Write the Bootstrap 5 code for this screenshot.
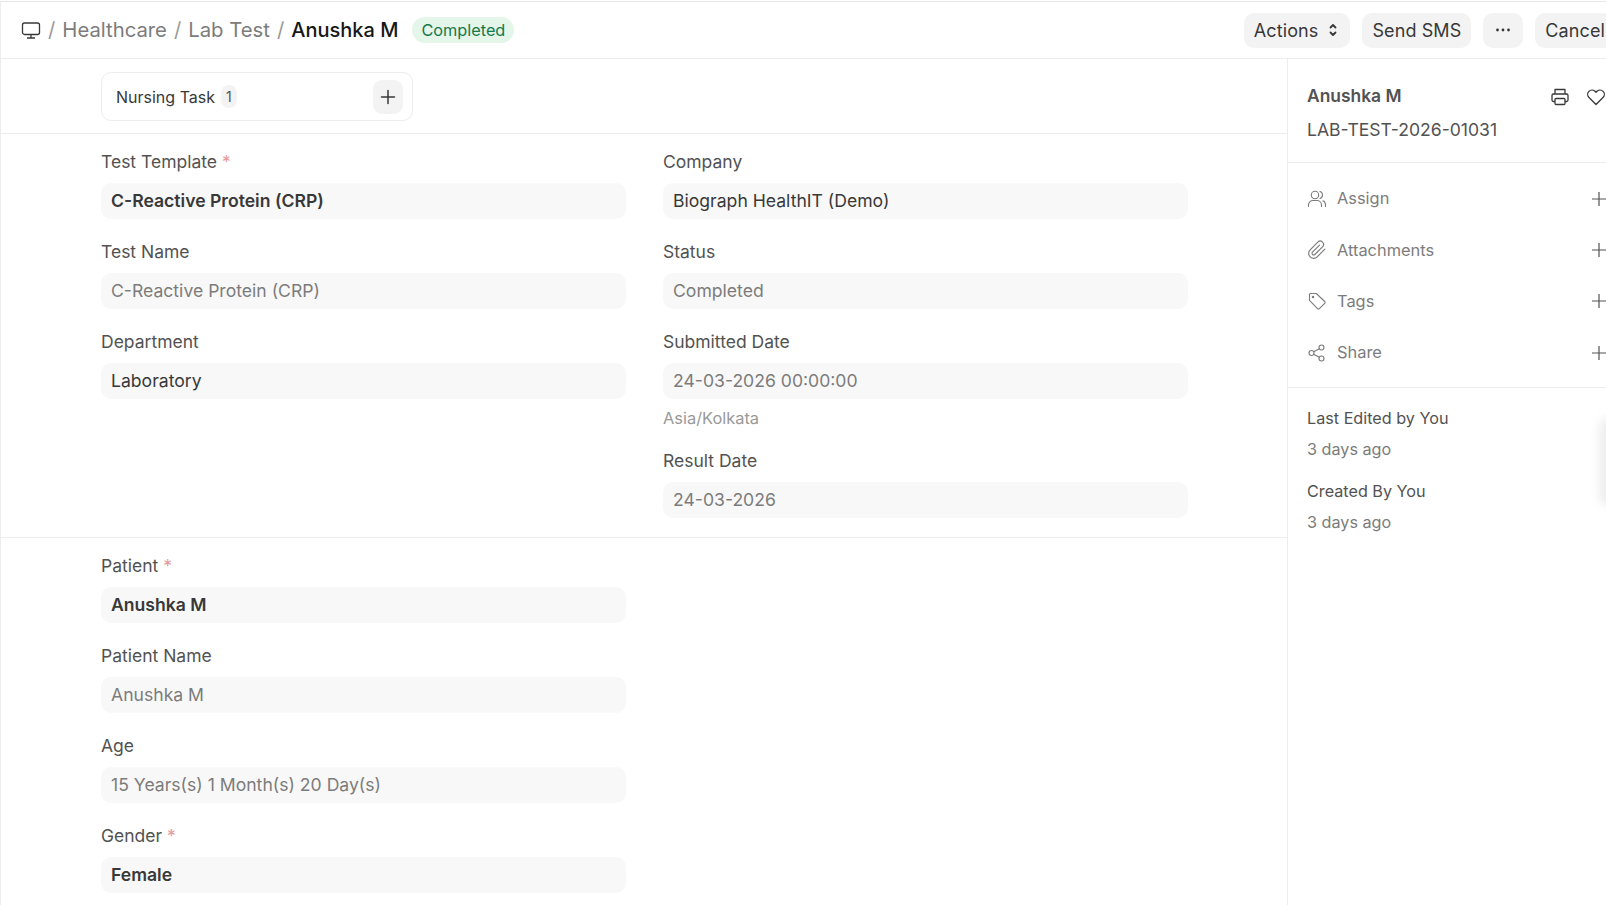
<!DOCTYPE html>
<html lang="en">
<head>
<meta charset="UTF-8">
<title>Anushka M - Lab Test</title>
<link rel="stylesheet" href="https://cdn.jsdelivr.net/npm/bootstrap@5.3.0/dist/css/bootstrap.min.css">
<style>
html, body { height: 905px; overflow: hidden; }
body { font-family: Inter, "Liberation Sans", sans-serif; background: #fff; color: #383838; }
.page-shell { width: 1606px; height: 905px; overflow: hidden; border-top: 1px solid #e6e6e6; border-left: 1px solid #ededed; margin-top: 1px; position: relative; }
.page-head { height: 57px; border-bottom: 1px solid #ededed; padding-left: 20px; white-space: nowrap; }
.crumb { font-size: 20.3px; color: #7c7c7c; }
.crumb-sep { color: #999; margin: 0 7px; }
.crumb-now { color: #171717; font-weight: 500; font-size: 20px; }
.status-pill { background: #e4f5e9; color: #16794c; font-size: 16.3px; height: 26px; line-height: 26px; padding: 0 9px; border-radius: 13px; margin-left: 14px; }
.head-btn { background: #f3f3f3; color: #383838; font-size: 18px; height: 35px; border-radius: 10px; padding: 0 10px; flex: none; letter-spacing: .1px; }
.head-more { width: 40px; }
.head-actions { gap: 12px; margin-left: auto; margin-right: -9px; }
.main-col { width: 1287px; flex: none; border-right: 1px solid #ededed; height: 847px; overflow: hidden; }
.links-bar { height: 75px; padding: 13px 0 0 100px; border-bottom: 1px solid #ededed; }
.link-box { width: 312px; height: 49px; border: 1px solid #ededed; border-radius: 10px; padding: 0 9px 0 14px; font-size: 16px; }
.count-chip { background: #f3f3f3; border-radius: 8px; font-size: 14px; padding: 1px 5px; margin-left: 6px; color: #525252; }
.add-box { width: 30px; height: 34px; margin-left: auto; background: #f3f3f3; border-radius: 9px; }
.form-part { padding: 18px 99px 19px 100px; border-bottom: 1px solid #ededed; }
.form-part .row { --bs-gutter-x: 37px; --bs-gutter-y: 0; }
.fld { margin-bottom: 23px; }
.fld:last-child { margin-bottom: 0; }
.fld-label { font-size: 17.5px; line-height: 20px; margin-bottom: 11px; color: #525252; }
.req { color: #e79a9a; }
.fld-value { height: 36px; line-height: 36px; background: #f8f8f8; border-radius: 10px; padding-left: 10px; font-size: 17.6px; color: #383838; }
.fld-value.is-strong { font-weight: 600; }
.fld-value.is-read { color: #7c7c7c; }
.fld-help { font-size: 16.4px; line-height: 20px; color: #999; margin: 9px 0 2px; }
.side-col { width: 330px; flex: none; color: #525252; }
.side-top { height: 104px; padding: 26px 0 0 19px; border-bottom: 1px solid #ededed; }
.side-name { font-size: 17.4px; line-height: 22px; font-weight: 600; }
.side-id { font-size: 17.6px; line-height: 22px; margin-top: 12px; }
.side-icons { gap: 16px; position: absolute; top: 85px; left: 1549px; }
.side-links { height: 225px; padding: 10px 0 0 19px; border-bottom: 1px solid #ededed; }
.side-link { height: 51.3px; font-size: 16.4px; color: #7c7c7c; }
.side-link svg:first-child { margin-right: 10px; flex: none; }
.side-plus { position: absolute; left: 1590px; }
.side-meta { padding: 20px 0 0 19px; font-size: 16.2px; }
.meta-line { line-height: 20px; margin-bottom: 10.5px; }
.meta-ago { color: #7c7c7c; margin-bottom: 22.5px; }
.edge-handle { position: absolute; left: 1598px; top: 416px; width: 20px; height: 88px; background: #eee; filter: blur(5px); border-radius: 10px; }
</style>
</head>
<body>
<div class="page-shell">
  <!-- header -->
  <div class="page-head d-flex align-items-center">
    <svg width="20" height="20" viewBox="0 0 20 20" fill="none" stroke="#383838" stroke-width="1.3"><rect x="1.5" y="3" width="17" height="11.5" rx="2"/><path d="M10 14.5v3.5M6 18h8"/></svg>
    <span class="crumb crumb-sep">/</span><span class="crumb">Healthcare</span>
    <span class="crumb crumb-sep">/</span><span class="crumb">Lab Test</span>
    <span class="crumb crumb-sep">/</span><span class="crumb crumb-now">Anushka M</span>
    <span class="status-pill">Completed</span>
    <div class="head-actions d-flex align-items-center">
      <div class="head-btn d-flex align-items-center">Actions
        <svg class="ms-2" width="14" height="18" viewBox="0 0 14 18" fill="none" stroke="#383838" stroke-width="1.8" stroke-linecap="round" stroke-linejoin="round"><path d="M4.5 6.500 7 4 9.500 6.500M4.500 11.500 7 14 9.500 11.500"/></svg>
      </div>
      <div class="head-btn d-flex align-items-center">Send SMS</div>
      <div class="head-btn head-more d-flex align-items-center justify-content-center">
        <svg width="16" height="4" viewBox="0 0 16 4" fill="#383838"><circle cx="2.500" cy="2" r="1.400"/><circle cx="8" cy="2" r="1.400"/><circle cx="13.500" cy="2" r="1.400"/></svg>
      </div>
      <div class="head-btn d-flex align-items-center">Cancel</div>
    </div>
  </div>

  <div class="d-flex">
    <div class="main-col">
      <div class="links-bar">
        <div class="link-box d-flex align-items-center">
          <span>Nursing Task</span><span class="count-chip">1</span>
          <div class="add-box d-flex align-items-center justify-content-center">
            <svg width="16" height="16" viewBox="0 0 16 16" stroke="#383838" stroke-width="1.500" stroke-linecap="round"><path d="M8 1.500v13M1.500 8h13"/></svg>
          </div>
        </div>
      </div>

      <div class="form-part">
        <div class="row">
          <div class="col-6">
            <div class="fld"><div class="fld-label">Test Template <span class="req">*</span></div><div class="fld-value is-strong">C-Reactive Protein (CRP)</div></div>
            <div class="fld"><div class="fld-label">Test Name</div><div class="fld-value is-read">C-Reactive Protein (CRP)</div></div>
            <div class="fld"><div class="fld-label">Department</div><div class="fld-value">Laboratory</div></div>
          </div>
          <div class="col-6">
            <div class="fld"><div class="fld-label">Company</div><div class="fld-value">Biograph HealthIT (Demo)</div></div>
            <div class="fld"><div class="fld-label">Status</div><div class="fld-value is-read">Completed</div></div>
            <div class="fld"><div class="fld-label">Submitted Date</div><div class="fld-value is-read">24-03-2026 00:00:00</div><div class="fld-help">Asia/Kolkata</div></div>
            <div class="fld"><div class="fld-label">Result Date</div><div class="fld-value is-read">24-03-2026</div></div>
          </div>
        </div>
      </div>

      <div class="form-part border-0">
        <div class="row">
          <div class="col-6">
            <div class="fld"><div class="fld-label">Patient <span class="req">*</span></div><div class="fld-value is-strong">Anushka M</div></div>
            <div class="fld"><div class="fld-label">Patient Name</div><div class="fld-value is-read">Anushka M</div></div>
            <div class="fld"><div class="fld-label">Age</div><div class="fld-value is-read">15 Years(s) 1 Month(s) 20 Day(s)</div></div>
            <div class="fld"><div class="fld-label">Gender <span class="req">*</span></div><div class="fld-value is-strong">Female</div></div>
          </div>
        </div>
      </div>
    </div>

    <!-- sidebar -->
    <div class="side-col">
      <div class="side-top">
        <div class="side-name">Anushka M</div>
        <div class="side-id">LAB-TEST-2026-01031</div>
      </div>
      <div class="side-links">
        <div class="side-link d-flex align-items-center">
          <svg width="20" height="20" viewBox="0 0 20 20" fill="none" stroke="#7c7c7c" stroke-width="1.100" stroke-linecap="round"><circle cx="8" cy="6" r="3.700"/><path d="M1.500 17.500v-1.500a4.500 4.500 0 0 1 4.500-4.500h4a4.500 4.500 0 0 1 4.500 4.500v1.500M13 2.500a3.700 3.700 0 0 1 0 7M16 11.800a4.500 4.500 0 0 1 2.500 4.200v1.500"/></svg>
          Assign
          <svg class="side-plus" width="16" height="16" viewBox="0 0 16 16" stroke="#525252" stroke-width="1.200"><path d="M8 1v14M1 8h14"/></svg>
        </div>
        <div class="side-link d-flex align-items-center">
          <svg width="20" height="20" viewBox="0 0 24 24" fill="none" stroke="#7c7c7c" stroke-width="1.400" stroke-linecap="round" stroke-linejoin="round"><path d="M21.440 11.050l-9.190 9.190a6 6 0 0 1-8.490-8.490l9.190-9.190a4 4 0 0 1 5.660 5.660l-9.200 9.190a2 2 0 0 1-2.830-2.830l8.490-8.480"/></svg>
          Attachments
          <svg class="side-plus" width="16" height="16" viewBox="0 0 16 16" stroke="#525252" stroke-width="1.200"><path d="M8 1v14M1 8h14"/></svg>
        </div>
        <div class="side-link d-flex align-items-center">
          <svg width="20" height="20" viewBox="0 0 20 20" fill="none" stroke="#7c7c7c" stroke-width="1.100" stroke-linejoin="round"><path d="M2.500 3.500a1 1 0 0 1 1-1h5.800l8.400 8a1.300 1.300 0 0 1 0 1.800l-5.400 5.400a1.300 1.300 0 0 1-1.800 0l-8-8.300z"/><circle cx="6" cy="6" r=".7"/></svg>
          Tags
          <svg class="side-plus" width="16" height="16" viewBox="0 0 16 16" stroke="#525252" stroke-width="1.200"><path d="M8 1v14M1 8h14"/></svg>
        </div>
        <div class="side-link d-flex align-items-center">
          <svg width="20" height="20" viewBox="0 0 20 20" fill="none" stroke="#7c7c7c" stroke-width="1.100"><circle cx="4.500" cy="10" r="2.500"/><circle cx="14.500" cy="4.500" r="2.500"/><circle cx="14.500" cy="15.500" r="2.500"/><path d="m6.700 8.800 5.600-3.100M6.700 11.200l5.600 3.100"/></svg>
          Share
          <svg class="side-plus" width="16" height="16" viewBox="0 0 16 16" stroke="#525252" stroke-width="1.200"><path d="M8 1v14M1 8h14"/></svg>
        </div>
      </div>
      <div class="side-meta">
        <div class="meta-line">Last Edited by You</div>
        <div class="meta-line meta-ago">3 days ago</div>
        <div class="meta-line">Created By You</div>
        <div class="meta-line meta-ago">3 days ago</div>
      </div>
    </div>
  </div>

  <!-- print / like sit over the sidebar's top block -->
  <div class="side-icons d-flex">
    <svg width="20" height="20" viewBox="0 0 20 20" fill="none" stroke="#383838" stroke-width="1.300" stroke-linejoin="round"><path d="M5 7V2.500h10V7M5 14.500H3.500a1.500 1.500 0 0 1-1.500-1.500V8.500A1.500 1.500 0 0 1 3.500 7h13A1.500 1.500 0 0 1 18 8.500V13a1.500 1.500 0 0 1-1.500 1.500H15"/><rect x="5" y="11.500" width="10" height="6" rx="1"/></svg>
    <svg width="20" height="20" viewBox="0 0 20 20" fill="none" stroke="#383838" stroke-width="1.300" stroke-linejoin="round"><path d="M10 17.500 3 10.500a4.300 4.300 0 0 1 6-6.200l1 1 1-1a4.300 4.300 0 0 1 6 6.200z"/></svg>
  </div>
  <div class="edge-handle"></div>
</div>
<script src="https://cdn.jsdelivr.net/npm/bootstrap@5.3.0/dist/js/bootstrap.bundle.min.js"></script>
</body>
</html>
